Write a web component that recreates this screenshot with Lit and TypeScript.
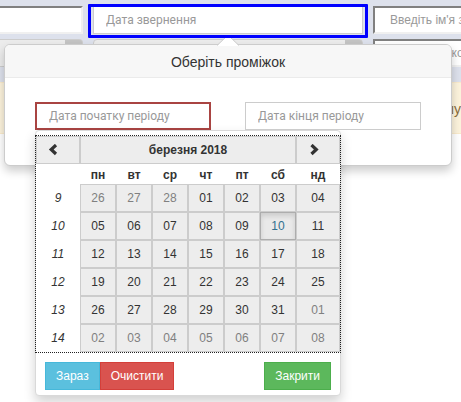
import { LitElement, html, css } from "lit";
import { customElement, property, state } from "lit/decorators.js";
import { classMap } from "lit/directives/class-map.js";

interface Week {
  number: number;
  days: string[];
}

const WEEKDAYS = ["пн", "вт", "ср", "чт", "пт", "сб", "нд"];

const WEEKS: Week[] = [
  { number: 9, days: ["26", "27", "28", "01", "02", "03", "04"] },
  { number: 10, days: ["05", "06", "07", "08", "09", "10", "11"] },
  { number: 11, days: ["12", "13", "14", "15", "16", "17", "18"] },
  { number: 12, days: ["19", "20", "21", "22", "23", "24", "25"] },
  { number: 13, days: ["26", "27", "28", "29", "30", "31", "01"] },
  { number: 14, days: ["02", "03", "04", "05", "06", "07", "08"] },
];

@customElement("date-picker")
export class DatePicker extends LitElement {
  @property() month = "березня 2018";
  @state() private today = "1-5";

  static styles = css`
    :host {
      display: block;
      box-sizing: border-box;
      width: 306px;
      padding: 5px 0;
      background: #fff;
      border: 1px solid #d9d9d9;
      border-radius: 4px;
      box-shadow: 0 6px 12px rgba(0, 0, 0, 0.18);
      font: 12px/18px "Liberation Sans", Arial, sans-serif;
      color: #333;
    }
    table {
      width: 100%;
      table-layout: fixed;
      border-collapse: separate;
      border-spacing: 0;
      outline: 1px dotted #222;
    }
    .edge {
      width: 44px;
    }
    th,
    td {
      padding: 0;
      text-align: center;
    }
    .weekday {
      height: 20px;
      vertical-align: bottom;
    }
    .week {
      font-style: italic;
      font-weight: normal;
    }
    button {
      display: block;
      box-sizing: border-box;
      width: 100%;
      height: 28px;
      margin: 0;
      padding: 0;
      font: inherit;
      color: inherit;
      background: #ededed;
      border: 1px solid #ccc;
      border-radius: 0;
    }
    .outside {
      color: #808080;
    }
    .today {
      color: #31708f;
      background: #e9e9e9;
      border-color: #adadad;
      box-shadow: inset 0 3px 5px rgba(0, 0, 0, 0.125);
    }
    svg {
      display: block;
      width: 12px;
      height: 12px;
    }
    .arrow {
      padding-left: 11px;
    }
    .footer {
      display: flex;
      padding: 10px 9px 0;
    }
    .footer button {
      width: auto;
      padding: 0 10px;
      color: #fff;
    }
    .footer .now {
      background: #5bc0de;
      border-color: #46b8da;
    }
    .footer .clear {
      background: #d9534f;
      border-color: #d43f3a;
    }
    .footer .close {
      margin-left: auto;
      background: #5cb85c;
      border-color: #4cae4c;
    }
  `;

  render() {
    return html`
      <table>
        <colgroup>
          <col class="edge" />
          <col span="6" />
          <col class="edge" />
        </colgroup>
        <thead>
          <tr>
            <th>
              <button class="arrow" aria-label="Попередній місяць">
                <svg viewBox="0 0 12 12">
                  <path d="M8 1 3.2 5.500 8 10" fill="none" stroke="#333" stroke-width="3.2" />
                </svg>
              </button>
            </th>
            <th colspan="6"><button>${this.month}</button></th>
            <th>
              <button class="arrow" aria-label="Наступний місяць">
                <svg viewBox="0 0 12 12">
                  <path d="M3.500 1 8.300 5.500 3.500 10" fill="none" stroke="#333" stroke-width="3.2" />
                </svg>
              </button>
            </th>
          </tr>
          <tr>
            <th></th>
            ${WEEKDAYS.map((day) => html`<th class="weekday" scope="col">${day}</th>`)}
          </tr>
        </thead>
        <tbody>
          ${WEEKS.map(
            (week, row) => html`<tr>
              <th class="week" scope="row">${week.number}</th>
              ${week.days.map((day, col) => {
                const outside =
                  (row === 0 && Number(day) > 20) || (row > 3 && Number(day) < 10);
                const today = this.today === `${row}-${col}`;
                return html`<td><button class=${classMap({ outside, today })}>${day}</button></td>`;
              })}
            </tr>`
          )}
        </tbody>
      </table>
      <div class="footer">
        <button class="now">Зараз</button>
        <button class="clear">Очистити</button>
        <button class="close">Закрити</button>
      </div>
    `;
  }
}

@customElement("app-root")
export class AppRoot extends LitElement {
  static styles = css`
    :host {
      display: block;
      position: relative;
      min-height: 100vh;
      overflow: hidden;
      background: #fff;
      font: 12px/18px "Liberation Sans", Arial, sans-serif;
      color: #333;
    }
    .filters {
      display: grid;
      grid-template-columns: 83px 270px 1fr;
      gap: 5px 10px;
      padding: 6px 0 15px;
      background: #dde1ec;
    }
    input,
    select {
      box-sizing: border-box;
      display: block;
      width: 100%;
      min-width: 0;
      height: 28px;
      margin: 0;
      padding: 0 12px;
      border: 1px solid #ccc;
      border-radius: 0;
      background: #fff;
      color: #333;
      font: 12px/18px Roboto, "Liberation Sans", sans-serif;
    }
    input::placeholder {
      color: #999;
      opacity: 1;
    }
    .inset {
      padding: 0 15px;
      border: 2px solid #f0f0f0;
      border-top-color: #808080;
      border-left-color: #808080;
      font-family: "Liberation Sans", Arial, sans-serif;
    }
    .first {
      border-left: 0;
    }
    .last {
      border-right: 0;
      padding-right: 0;
    }
    select {
      appearance: none;
      border-radius: 4px;
      background: linear-gradient(#c4c4c4, #c4c4c4) right / 17px 100% no-repeat #ececec;
    }
    .open {
      border-left: 0;
      border-radius: 0 4px 4px 0;
    }
    .marked {
      position: relative;
      z-index: 2;
    }
    .marked::after {
      content: "";
      position: absolute;
      inset: -2px -5px -4px;
      border: 3px solid #00f;
      border-radius: 1px;
      pointer-events: none;
    }
    .notice {
      box-sizing: border-box;
      height: 52px;
      padding: 17px 0;
      overflow: hidden;
      background: #fcf3dc;
      border: solid #faebcc;
      border-width: 1px 0;
      color: #8a6d3b;
      font-size: 14px;
      line-height: 18px;
      text-align: right;
    }
    .popover {
      position: absolute;
      z-index: 1;
      top: 44px;
      left: 4px;
      right: 9px;
      box-sizing: border-box;
      border: 1px solid #ccc;
      border-radius: 6px;
      background: #fff;
      box-shadow: 0 5px 10px rgba(0, 0, 0, 0.2);
    }
    .tip {
      position: absolute;
      top: -10px;
      left: 50%;
      width: 22px;
      height: 11px;
      transform: translateX(-50%);
    }
    h3 {
      margin: 0;
      padding: 9px 14px 7px;
      font-size: 14px;
      line-height: 16px;
      font-weight: normal;
      text-align: center;
      background: #f7f7f7;
      border-bottom: 1px solid #ebebeb;
      border-radius: 5px 5px 0 0;
    }
    .period {
      display: grid;
      grid-template-columns: 1fr 1fr;
      gap: 34px;
      padding: 24px 30px 35px;
    }
    .field {
      position: relative;
    }
    .invalid {
      border: 2px solid #a94442;
      padding: 0 12px;
    }
    date-picker {
      position: absolute;
      top: 100%;
      left: 0;
    }
  `;

  render() {
    return html`
      <div class="filters">
        <input class="inset first" aria-label="Номер" />
        <div class="marked">
          <input placeholder="Дата звернення" aria-label="Дата звернення" />
        </div>
        <input class="inset last" placeholder="Введіть ім'я заявника" aria-label="Ім'я" />
        <select class="open" aria-label="Стан"></select>
        <select aria-label="Тип"></select>
        <input class="inset last" placeholder="Введіть № контракту" aria-label="Контракт" />
      </div>
      <div class="notice">шу</div>
      <div class="popover">
        <svg class="tip" viewBox="0 0 22 11">
          <path d="M0 11 11 0l11 11z" fill="#fff" />
          <path d="M0 10.500 10.500.500h1L22 10.500" fill="none" stroke="#ccc" />
        </svg>
        <h3>Оберіть проміжок</h3>
        <div class="period">
          <div class="field">
            <input class="invalid" placeholder="Дата початку періоду" aria-label="Дата початку періоду" />
            <date-picker></date-picker>
          </div>
          <div class="field">
            <input placeholder="Дата кінця періоду" aria-label="Дата кінця періоду" />
          </div>
        </div>
      </div>
    `;
  }
}
